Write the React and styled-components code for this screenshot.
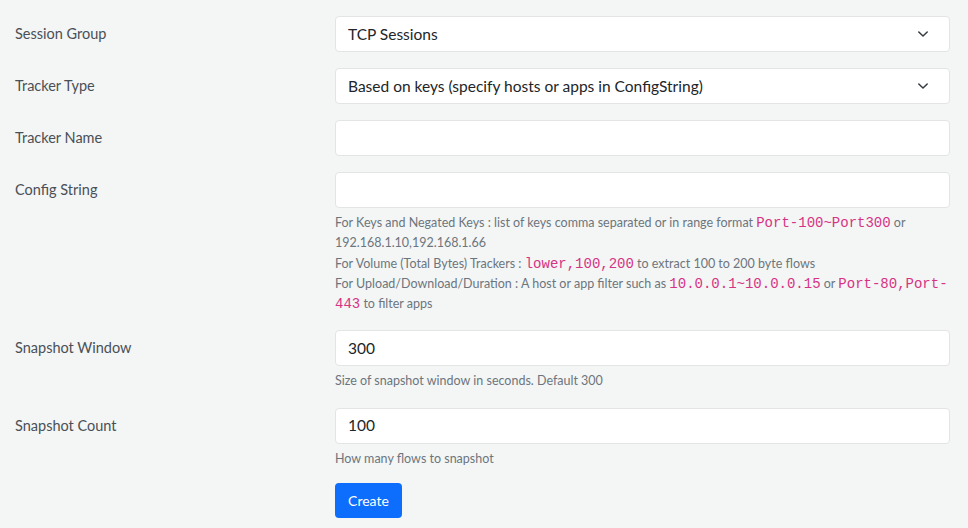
import styled, { createGlobalStyle } from 'styled-components';

const GlobalStyle = createGlobalStyle`
  html, body {
    margin: 0;
    padding: 0;
    background: #f4f5f5;
    font-family: Lato, "Noto Sans", sans-serif;
  }
`;

function Chevron() {
  return (
    <svg width="12" height="8" viewBox="0 0 12 8" fill="none">
      <path d="M1.8 2 L6 6 L10.2 2" stroke="#343a40" strokeWidth="1.5" strokeLinecap="round" strokeLinejoin="round" />
    </svg>
  );
}

function App() {
  return (
    <>
      <GlobalStyle />
      <Form>
        <Row>
          <Label>Session Group</Label>
          <Field>
            <Select>
              <span>TCP Sessions</span>
              <Chevron />
            </Select>
          </Field>
        </Row>
        <Row>
          <Label>Tracker Type</Label>
          <Field>
            <Select>
              <span>Based on keys (specify hosts or apps in ConfigString)</span>
              <Chevron />
            </Select>
          </Field>
        </Row>
        <Row>
          <Label>Tracker Name</Label>
          <Field>
            <Input />
          </Field>
        </Row>
        <Row>
          <Label>Config String</Label>
          <Field>
            <Input />
            <Help>
              For Keys and Negated Keys : list of keys comma separated or in range format{' '}
              <Code>Port-100~Port300</Code> or 192.168.1.10,192.168.1.66
              <br />
              For Volume (Total Bytes) Trackers : <Code>lower,100,200</Code> to extract 100 to 200 byte flows
              <br />
              For Upload/Download/Duration : A host or app filter such as{' '}
              <Code>10.0.0.1~10.0.0.15</Code> or <Code>Port-80,Port-&#8203;443</Code> to filter apps
            </Help>
          </Field>
        </Row>
        <Row>
          <Label>Snapshot Window</Label>
          <Field>
            <Input>300</Input>
            <Help>Size of snapshot window in seconds. Default 300</Help>
          </Field>
        </Row>
        <Row>
          <Label>Snapshot Count</Label>
          <Field>
            <Input>100</Input>
            <Help>How many flows to snapshot</Help>
          </Field>
        </Row>
        <ButtonRow>
          <span />
          <Field>
            <Button>Create</Button>
          </Field>
        </ButtonRow>
      </Form>
    </>
  );
}

export default App;

const Form = styled.div`
  padding: 16px 18px 0 15px;
`;

const Row = styled.div`
  display: grid;
  grid-template-columns: 320px 1fr;
  margin-bottom: 16px;
`;

const ButtonRow = styled(Row)`
  margin-top: -2px;
`;

const Label = styled.div`
  color: #495057;
  font-size: 14.5px;
  line-height: 22px;
  padding-top: 7px;
`;

const Field = styled.div`
  display: flex;
  flex-direction: column;
  align-items: stretch;
`;

const Box = styled.div`
  box-sizing: border-box;
  height: 36px;
  background: #fff;
  border: 1px solid #e3e4e4;
  border-radius: 4px;
  padding: 0 12px 1px;
  display: flex;
  align-items: center;
  color: #212529;
  font-size: 15.5px;
`;

const Input = styled(Box)``;

const Select = styled(Box)`
  justify-content: space-between;
  padding-right: 20px;
`;

const Help = styled.div`
  margin-top: 5px;
  color: #6c757d;
  font-size: 12.5px;
  line-height: 20.3px;
`;

const Code = styled.code`
  font-family: "Liberation Mono", monospace;
  font-size: 14px;
  line-height: 1;
  color: #d63384;
`;

const Button = styled.button`
  align-self: flex-start;
  width: 67px;
  height: 35px;
  background: #0d6efd;
  color: #fff;
  border: none;
  border-radius: 4px;
  font-family: Lato, "Noto Sans", sans-serif;
  font-size: 14px;
`;
